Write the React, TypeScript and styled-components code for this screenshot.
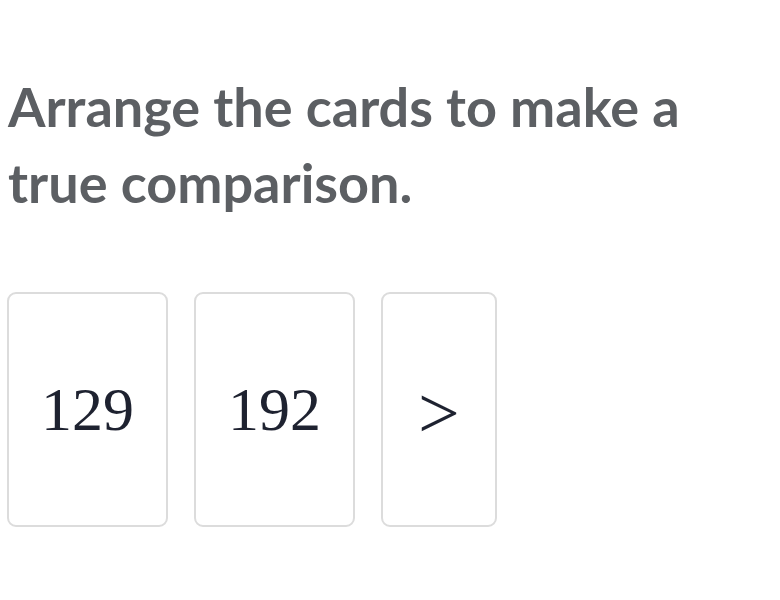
import styled, { createGlobalStyle } from "styled-components";

const GlobalStyle = createGlobalStyle`
  html, body {
    margin: 0;
    padding: 0;
    background: #ffffff;
  }
`;

const Page = styled.div`
  padding: 69px 7px 0 7px;
`;

const Prompt = styled.h1`
  margin: 0;
  padding-left: 1px;
  font-family: Lato, "Open Sans", sans-serif;
  font-weight: 700;
  font-size: 54px;
  line-height: 76px;
  color: #5c5f63;
`;

const CardRow = styled.div`
  display: flex;
  gap: 26px;
  margin-top: 71px;
`;

const Card = styled.div<{ $operator?: boolean }>`
  height: 235px;
  box-sizing: border-box;
  padding: ${(p) => (p.$operator ? "8px 35px 0" : "0 32px")};
  display: flex;
  align-items: center;
  justify-content: center;
  border: 2px solid #dcdcdc;
  border-radius: 9px;
  background: #fff;
  font-family: "Liberation Serif", "DejaVu Serif", serif;
  font-size: ${(p) => (p.$operator ? 74 : 62)}px;
  color: #1e2230;
`;

const cards = [
  { value: "129" },
  { value: "192" },
  { value: ">", operator: true },
];

function App() {
  return (
    <>
      <GlobalStyle />
      <Page>
        <Prompt>Arrange the cards to make a true comparison.</Prompt>
        <CardRow>
          {cards.map((c) => (
            <Card key={c.value} $operator={c.operator}>
              {c.value}
            </Card>
          ))}
        </CardRow>
      </Page>
    </>
  );
}

export default App;
